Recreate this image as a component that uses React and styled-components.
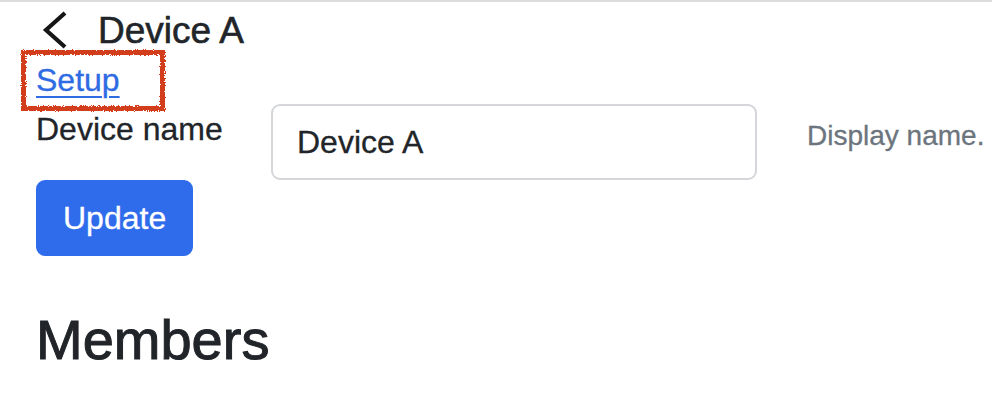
import React from 'react';
import styled, { createGlobalStyle } from 'styled-components';

const GlobalStyle = createGlobalStyle`
  html, body {
    margin: 0;
    padding: 0;
    background: #ffffff;
  }
  body {
    font-family: "Liberation Sans", Arial, sans-serif;
    color: #212529;
  }
`;

const Page = styled.div`
  border-top: 2px solid #dcdcdc;
  padding: 0 0 0 36px;
`;

const Header = styled.div`
  display: flex;
  align-items: center;
  height: 54px;
  gap: 26px;
  margin-left: 4px;
`;

const BackButton = styled.button`
  display: flex;
  align-items: center;
  justify-content: center;
  width: 32px;
  height: 40px;
  padding: 0;
  margin-top: 2px;
  border: none;
  background: none;
  cursor: pointer;
`;

const Title = styled.h4`
  margin: 5px 0 0;
  font-size: 37px;
  font-weight: 500;
  line-height: 1.2;
  -webkit-text-stroke: 0.6px currentColor;
`;

const Highlight = styled.span`
  position: relative;
  display: inline-block;

  &::after {
    content: '';
    position: absolute;
    top: -6px;
    left: -15px;
    right: -45px;
    bottom: -7px;
    border: 5px solid #d23d1c;
    filter: url(#rough);
    pointer-events: none;
  }
`;

const SetupLink = styled.a`
  display: inline-block;
  font-size: 32px;
  line-height: 48px;
  color: #2f6be3;
  text-decoration: underline;
  text-underline-offset: 5px;
  text-decoration-thickness: 2px;
  -webkit-text-stroke: 0.3px currentColor;
`;

const FormRow = styled.div`
  display: grid;
  grid-template-columns: 185px 486px auto;
  column-gap: 50px;
  align-items: start;
`;

const Label = styled.label`
  font-size: 32px;
  line-height: 48px;
  padding-top: 1px;
  white-space: nowrap;
  -webkit-text-stroke: 0.3px currentColor;
`;

const Input = styled.input`
  box-sizing: border-box;
  width: 100%;
  height: 76px;
  padding: 12px 24px;
  font-family: inherit;
  font-size: 32px;
  line-height: 48px;
  color: #212529;
  border: 2px solid #d4d6d9;
  border-radius: 9px;
  outline: none;
  -webkit-text-stroke: 0.3px currentColor;
`;

const Help = styled.div`
  font-size: 28px;
  line-height: 42px;
  color: #6c757d;
  margin-top: 11px;
  white-space: nowrap;
  -webkit-text-stroke: 0.3px currentColor;
`;

const Button = styled.button`
  display: block;
  box-sizing: border-box;
  height: 76px;
  padding: 12px 25px;
  font-family: inherit;
  font-size: 32px;
  line-height: 48px;
  color: #ffffff;
  background: #2e6cec;
  border: 2px solid #2e6cec;
  border-radius: 9px;
  cursor: pointer;
  -webkit-text-stroke: 0.3px currentColor;
`;

const SectionTitle = styled.h3`
  margin: 50px 0 0;
  font-size: 56px;
  font-weight: 500;
  line-height: 1.2;
  -webkit-text-stroke: 1px currentColor;
`;

const Defs = styled.svg`
  display: block;
  width: 0;
  height: 0;
`;

const ChevronLeft = () => (
  <svg width="28" height="40" viewBox="0 0 28 40" fill="none">
    <path d="M23 3 L4 20 L23 37" stroke="#161616" strokeWidth="4.2" strokeLinecap="butt" strokeLinejoin="miter" />
  </svg>
);

const App = () => {
  return (
    <>
      <GlobalStyle />
      <Defs aria-hidden="true">
        <filter id="rough">
          <feTurbulence type="fractalNoise" baseFrequency="0.9" numOctaves="2" result="noise" />
          <feDisplacementMap in="SourceGraphic" in2="noise" scale="4" />
        </filter>
      </Defs>
      <Page>
        <Header>
          <BackButton aria-label="Back">
            <ChevronLeft />
          </BackButton>
          <Title>Device A</Title>
        </Header>

        <Highlight>
          <SetupLink href="#setup">Setup</SetupLink>
        </Highlight>

        <FormRow>
          <Label htmlFor="device-name">Device name</Label>
          <Input id="device-name" defaultValue="Device A" />
          <Help>Display name.</Help>
        </FormRow>

        <Button>Update</Button>

        <SectionTitle>Members</SectionTitle>
      </Page>
    </>
  );
};

export default App;
